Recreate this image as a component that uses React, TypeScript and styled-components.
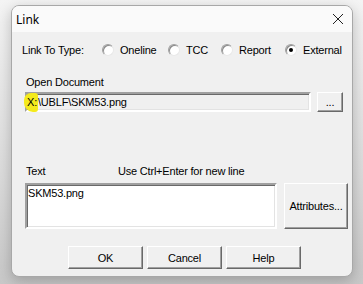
import React from 'react';
import styled, { createGlobalStyle } from 'styled-components';

const GlobalStyle = createGlobalStyle`
  html, body {
    margin: 0;
    padding: 0;
    background: linear-gradient(180deg, #f4f4f4 0%, #dcdcdc 60%, #c8c8c8 100%);
    width: 363px;
    height: 284px;
    overflow: hidden;
  }
  * { box-sizing: border-box; }
`;

const Page = styled.div`
  padding: 5px 0 0 11px;
`;

const Dialog = styled.div`
  width: 342px;
  height: 272px;
  background: #f0f0f0;
  border: 1px solid #a8a8a8;
  border-radius: 8px;
  overflow: hidden;
  box-shadow: 0 4px 14px rgba(0, 0, 0, 0.22);
  font-family: "Liberation Sans", Arial, sans-serif;
  font-size: 11px;
  letter-spacing: -0.2px;
  color: #000;
  display: flex;
  flex-direction: column;
`;

const TitleBar = styled.div`
  height: 26px;
  background: #fafafa;
  display: flex;
  align-items: center;
  justify-content: space-between;
  padding: 0 8px 0 4px;
  font-family: "Noto Sans", "Liberation Sans", sans-serif;
  font-size: 12px;
  letter-spacing: 0;
`;

const Close = styled.svg`
  width: 12px;
  height: 12px;
`;

const Body = styled.div`
  padding: 11px 0 0 10px;
  display: flex;
  flex-direction: column;
`;

const TypeRow = styled.div`
  display: flex;
  align-items: center;
  height: 14px;
  white-space: nowrap;
`;

const TypeLabel = styled.span`
  width: 80px;
  flex-shrink: 0;
`;

const RadioItem = styled.label<{ $w: number }>`
  display: flex;
  align-items: center;
  gap: 6px;
  width: ${p => p.$w}px;
  flex-shrink: 0;
`;

const RadioCircle = styled.span<{ $checked?: boolean }>`
  width: 12px;
  height: 12px;
  flex-shrink: 0;
  border-radius: 50%;
  background: #fff;
  border: 1px solid;
  border-color: #a0a0a0 #e8e8e8 #e8e8e8 #a0a0a0;
  box-shadow: inset 1px 1px 0 #8a8a8a;
  display: flex;
  align-items: center;
  justify-content: center;
  &::after {
    content: '';
    width: 4px;
    height: 4px;
    border-radius: 50%;
    background: ${p => (p.$checked ? '#000' : 'transparent')};
  }
`;

const FieldLabel = styled.div<{ $top: number }>`
  margin-top: ${p => p.$top}px;
  padding-left: 4px;
  height: 13px;
  line-height: 13px;
`;

const FieldRow = styled.div<{ $top: number; $gap: number }>`
  display: flex;
  align-items: flex-start;
  gap: ${p => p.$gap}px;
  margin-top: ${p => p.$top}px;
  padding-left: 3px;
`;

const Sunken = styled.div<{ $w: number; $h: number; $bg: string }>`
  width: ${p => p.$w}px;
  height: ${p => p.$h}px;
  background: ${p => p.$bg};
  border: 2px solid;
  border-color: #a0a0a0 #fff #fff #a0a0a0;
  box-shadow: inset 1px 1px 0 #696969, inset -1px -1px 0 #e3e3e3;
  padding: 2px 1px;
  line-height: 13px;
  white-space: nowrap;
`;

const Highlight = styled.span`
  background: #f4ea1c;
  border-radius: 7px 3px 3px 9px;
  padding: 3px 1px 4px 3px;
  margin-left: -4px;
`;

const Button = styled.button<{ $w: number; $h: number }>`
  width: ${p => p.$w}px;
  height: ${p => p.$h}px;
  flex-shrink: 0;
  background: #f0f0f0;
  border: 1px solid;
  border-color: #fff #696969 #696969 #fff;
  box-shadow: inset -1px -1px 0 #a0a0a0;
  font-family: "Liberation Sans", Arial, sans-serif;
  font-size: 11px;
  letter-spacing: -0.2px;
  color: #000;
  padding: 0;
  display: flex;
  align-items: center;
  justify-content: center;
`;

const Footer = styled.div`
  display: flex;
  gap: 4px;
  margin-top: 17px;
  padding-left: 46px;
`;

const HintRow = styled.div`
  display: flex;
  margin-top: 53px;
  padding-left: 4px;
  height: 13px;
  line-height: 13px;
`;

const HintLabel = styled.span`
  width: 92px;
`;

const types = [
  { name: 'Oneline', checked: false, w: 66 },
  { name: 'TCC', checked: false, w: 53 },
  { name: 'Report', checked: false, w: 64 },
  { name: 'External', checked: true, w: 60 },
];

export default function App() {
  return (
    <>
      <GlobalStyle />
      <Page>
        <Dialog>
          <TitleBar>
            <span>Link</span>
            <Close viewBox="0 0 12 12">
              <path d="M1 1 L11 11 M11 1 L1 11" stroke="#222" strokeWidth="1" fill="none" />
            </Close>
          </TitleBar>
          <Body>
            <TypeRow>
              <TypeLabel>Link To Type:</TypeLabel>
              {types.map(t => (
                <RadioItem key={t.name} $w={t.w}>
                  <RadioCircle $checked={t.checked} />
                  <span>{t.name}</span>
                </RadioItem>
              ))}
            </TypeRow>
            <FieldLabel $top={19}>Open Document</FieldLabel>
            <FieldRow $top={3} $gap={6}>
              <Sunken $w={286} $h={20} $bg="#f0f0f0">
                <Highlight>X:</Highlight>\UBLF\SKM53.png
              </Sunken>
              <Button $w={26} $h={20}>...</Button>
            </FieldRow>
            <HintRow>
              <HintLabel>Text</HintLabel>
              <span>Use Ctrl+Enter for new line</span>
            </HintRow>
            <FieldRow $top={5} $gap={7}>
              <Sunken $w={252} $h={46} $bg="#fff">SKM53.png</Sunken>
              <Button $w={64} $h={46}>Attributes...</Button>
            </FieldRow>
            <Footer>
              <Button $w={75} $h={23}>OK</Button>
              <Button $w={75} $h={23}>Cancel</Button>
              <Button $w={75} $h={23}>Help</Button>
            </Footer>
          </Body>
        </Dialog>
      </Page>
    </>
  );
}
